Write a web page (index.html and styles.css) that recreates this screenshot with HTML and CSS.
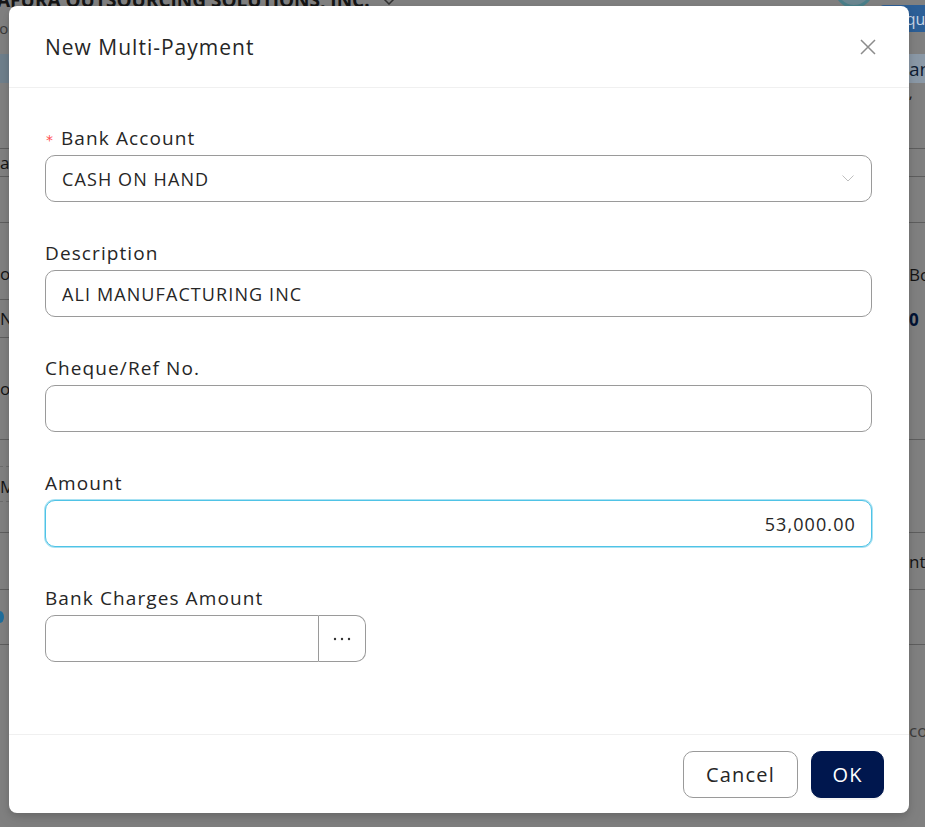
FILE: index.html
```html
<!DOCTYPE html>
<html lang="en">
<head>
<meta charset="utf-8">
<title>New Multi-Payment</title>
<link rel="stylesheet" href="styles.css">
</head>
<body>
<div class="page">
  <header class="app-head">
    <div class="brand">
      <span class="company">AFURA OUTSOURCING SOLUTIONS, INC.</span>
      <svg class="brand-chev" width="14" height="8" viewBox="0 0 14 8"><polyline points="1,1 7,7 13,1" fill="none" stroke="#333" stroke-width="1.5"/></svg>
    </div>
    <div class="head-right">
      <span class="avatar"></span>
      <span class="inquire">Inquire</span>
    </div>
  </header>
  <div class="sub-line"><span class="sub-text">No:</span></div>
  <div class="row h-band"><div class="c band-l"></div><div class="c band-r"><span class="navy">an</span></div></div>
  <div class="row h66 line"><div class="c"></div><div class="c"><span class="small">,</span></div></div>
  <div class="row h28 line"><div class="c mid">ar</div><div class="c"></div></div>
  <div class="row h46 line"><div class="c"></div><div class="c"></div></div>
  <div class="row h77"><div class="c line end">o</div><div class="c end">Bo</div></div>
  <div class="row h38"><div class="c line mid">NT</div><div class="c mid big">0</div></div>
  <div class="row h102 line"><div class="c mid">of</div><div class="c"></div></div>
  <div class="row h93 line"><div class="c dashed mid">M</div><div class="c"></div></div>
  <div class="row h57 line"><div class="c"></div><div class="c mid">nt</div></div>
  <div class="row h55 line"><div class="c mid"><span class="dot"></span></div><div class="c"></div></div>
  <div class="row h100"><div class="c"></div><div class="c end low grey">co</div></div>
</div>

<div class="modal" role="dialog" aria-labelledby="dlg-title">
  <div class="modal-head">
    <h2 id="dlg-title">New Multi-Payment</h2>
    <button class="close" aria-label="Close">
      <svg width="16" height="16" viewBox="0 0 16 16"><path d="M1 1 L15 15 M15 1 L1 15" stroke="#8c8c8c" stroke-width="1.5" fill="none"/></svg>
    </button>
  </div>
  <div class="modal-body">
    <div class="field">
      <label><span class="req">*</span>Bank Account</label>
      <div class="select">
        <span>CASH ON HAND</span>
        <svg width="12" height="7" viewBox="0 0 12 7"><polyline points="0.5,0.5 6,6 11.5,0.5" fill="none" stroke="#bfbfbf" stroke-width="1"/></svg>
      </div>
    </div>
    <div class="field">
      <label>Description</label>
      <input class="input" type="text" value="ALI MANUFACTURING INC">
    </div>
    <div class="field">
      <label>Cheque/Ref No.</label>
      <input class="input" type="text" value="">
    </div>
    <div class="field">
      <label>Amount</label>
      <input class="input num focus" type="text" value="53,000.00">
    </div>
    <div class="field">
      <label>Bank Charges Amount</label>
      <div class="group">
        <input class="input grp-input" type="text" value="">
        <button class="grp-btn" aria-label="More">
          <svg width="18" height="4" viewBox="0 0 18 4"><circle cx="2" cy="2" r="1.2" fill="#333"/><circle cx="9" cy="2" r="1.2" fill="#333"/><circle cx="16" cy="2" r="1.2" fill="#333"/></svg>
        </button>
      </div>
    </div>
  </div>
  <div class="modal-foot">
    <button class="btn cancel">Cancel</button>
    <button class="btn primary">OK</button>
  </div>
</div>
</body>
</html>
```
FILE: styles.css
```css
* { box-sizing: border-box; }
html, body { margin: 0; padding: 0; }
body {
  width: 925px;
  height: 827px;
  overflow: hidden;
  background: #808080;
  font-family: "Open Sans", "Liberation Sans", sans-serif;
  position: relative;
}

/* ---------- dimmed background page ---------- */
.page { width: 925px; height: 827px; overflow: hidden; color: #141414; }
.app-head {
  height: 40px;
  display: flex;
  justify-content: space-between;
  align-items: flex-start;
  overflow: hidden;
}
.brand { display: flex; align-items: center; gap: 12px; margin-top: -13px; margin-left: -3px; flex: none; }
.company { font-weight: 700; font-size: 19px; color: #151515; white-space: nowrap; }
.brand-chev { margin-top: 2px; }
.head-right { display: flex; align-items: flex-start; gap: 6px; margin-right: -32px; flex: none; }
.avatar {
  width: 40px; height: 40px; margin-top: -32px;
  border-radius: 50%;
  border: 3px solid #4a7f8a;
  background: #6b8791;
}
.inquire {
  margin-top: 5px;
  height: 27px;
  padding: 3px 12px 0 12px;
  white-space: nowrap;
  background: #2c5f97;
  color: #c9d6e6;
  font-size: 16px;
  border-radius: 4px;
}
.sub-line { height: 14px; display: flow-root; }
.sub-text { display: block; margin-top: -22px; margin-left: -12px; font-size: 15px; color: #3b3b3b; }

.row { display: grid; grid-template-columns: 909px 16px; }
.row .c { overflow: hidden; white-space: nowrap; font-size: 17px; display: flex; }
.row .c.mid { align-items: center; }
.row .c.end { align-items: flex-end; padding-bottom: 14px; }
.row .c.end.low { padding-bottom: 3px; }
.line > .c, .c.line { border-bottom: 1px solid #5e5e5e; }
.c.dashed { position: relative; }
.c.dashed::before, .c.dashed::after {
  content: "";
  position: absolute; left: 0; width: 9px;
  border-top: 1px dashed #6c6c6c;
}
.c.dashed::before { top: 26px; }
.c.dashed::after { top: 61px; }
.band-l { background: #6f7f8c; }
.band-r { background: #8b99a7; }
.h-band { height: 29px; }
.h66 { height: 66px; }
.h28 { height: 28px; }
.h46 { height: 46px; }
.h77 { height: 77px; }
.h38 { height: 38px; }
.h102 { height: 102px; }
.h93 { height: 93px; }
.h57 { height: 57px; }
.h55 { height: 55px; }
.h100 { height: 100px; }
.navy { color: #0f1d33; font-size: 19px; align-self: center; }
.big { font-weight: 700; font-size: 26px; color: #001233; }
.grey { color: #3c3c3c; }
.small { font-size: 14px; }
.dot { width: 8px; height: 12px; margin-left: -4px; border-radius: 50%; background: #1f6e9c; }

/* ---------- modal ---------- */
.modal {
  position: absolute;
  top: 6px;
  left: 9px;
  width: 900px;
  height: 807px;
  background: #fff;
  border-radius: 8px;
  box-shadow: 0 6px 16px rgba(0,0,0,0.08), 0 3px 6px rgba(0,0,0,0.12);
  display: flex;
  flex-direction: column;
  color: #262626;
}
.modal-head {
  height: 82px;
  flex: none;
  display: flex;
  align-items: center;
  justify-content: space-between;
  padding: 0 32px 0 36px;
  border-bottom: 1px solid #f0f0f0;
}
.modal-head h2 {
  margin: 0;
  font-size: 21px;
  font-weight: 500;
  letter-spacing: 1px;
  color: #262626;
}
.close {
  border: 0; background: none; padding: 0;
  width: 18px; height: 18px;
  display: flex; align-items: center; justify-content: center;
}

.modal-body {
  flex: 1;
  padding: 38px 37px 0 36px;
}
.field { margin-bottom: 39px; }
.field label {
  display: flex;
  align-items: center;
  height: 24px;
  margin-bottom: 5px;
  font-size: 19px;
  letter-spacing: 1.1px;
  color: #262626;
}
.req {
  display: inline-block;
  width: 16px;
  padding-left: 1px;
  margin-top: 4px;
  color: #ff4d4f;
  font-family: "DejaVu Sans", sans-serif;
  font-size: 14px;
  letter-spacing: 0;
}
.select, .input {
  width: 100%;
  height: 47px;
  border: 1px solid #9a9a9a;
  border-radius: 10px;
  background: #fff;
  font-family: "Open Sans", "Liberation Sans", sans-serif;
  font-size: 18px;
  letter-spacing: 1.1px;
  color: #262626;
  padding: 0 16px;
}
.select {
  display: flex;
  align-items: center;
  justify-content: space-between;
}
.select svg { margin-right: 1px; }
.input { outline: none; display: block; }
.input.num { text-align: right; padding-right: 15px; }
.input.focus {
  border-color: #4fc3e6;
  box-shadow: 0 0 0 1px #a9e2f3;
}
.group { display: flex; width: 321px; }
.grp-input {
  width: 274px;
  border-radius: 10px 0 0 10px;
}
.grp-btn {
  width: 47px;
  height: 47px;
  border: 1px solid #9a9a9a;
  border-left: 0;
  border-radius: 0 10px 10px 0;
  background: #fff;
  padding: 0;
  display: flex; align-items: center; justify-content: center;
}

.modal-foot {
  flex: none;
  height: 79px;
  border-top: 1px solid #f0f0f0;
  display: flex;
  justify-content: flex-end;
  align-items: center;
  gap: 13px;
  padding: 0 25px 0 0;
}
.btn {
  height: 47px;
  border-radius: 10px;
  border: 1px solid #9a9a9a;
  background: #fff;
  font-family: "Open Sans", "Liberation Sans", sans-serif;
  font-size: 20px;
  letter-spacing: 1.2px;
  color: #262626;
  padding: 0;
}
.btn.cancel { width: 115px; }
.btn.primary {
  background: #00174e;
  border-color: #00174e;
  color: #fff;
  width: 73px;
  box-shadow: 0 2px 0 rgba(0,0,0,0.04);
}
```
